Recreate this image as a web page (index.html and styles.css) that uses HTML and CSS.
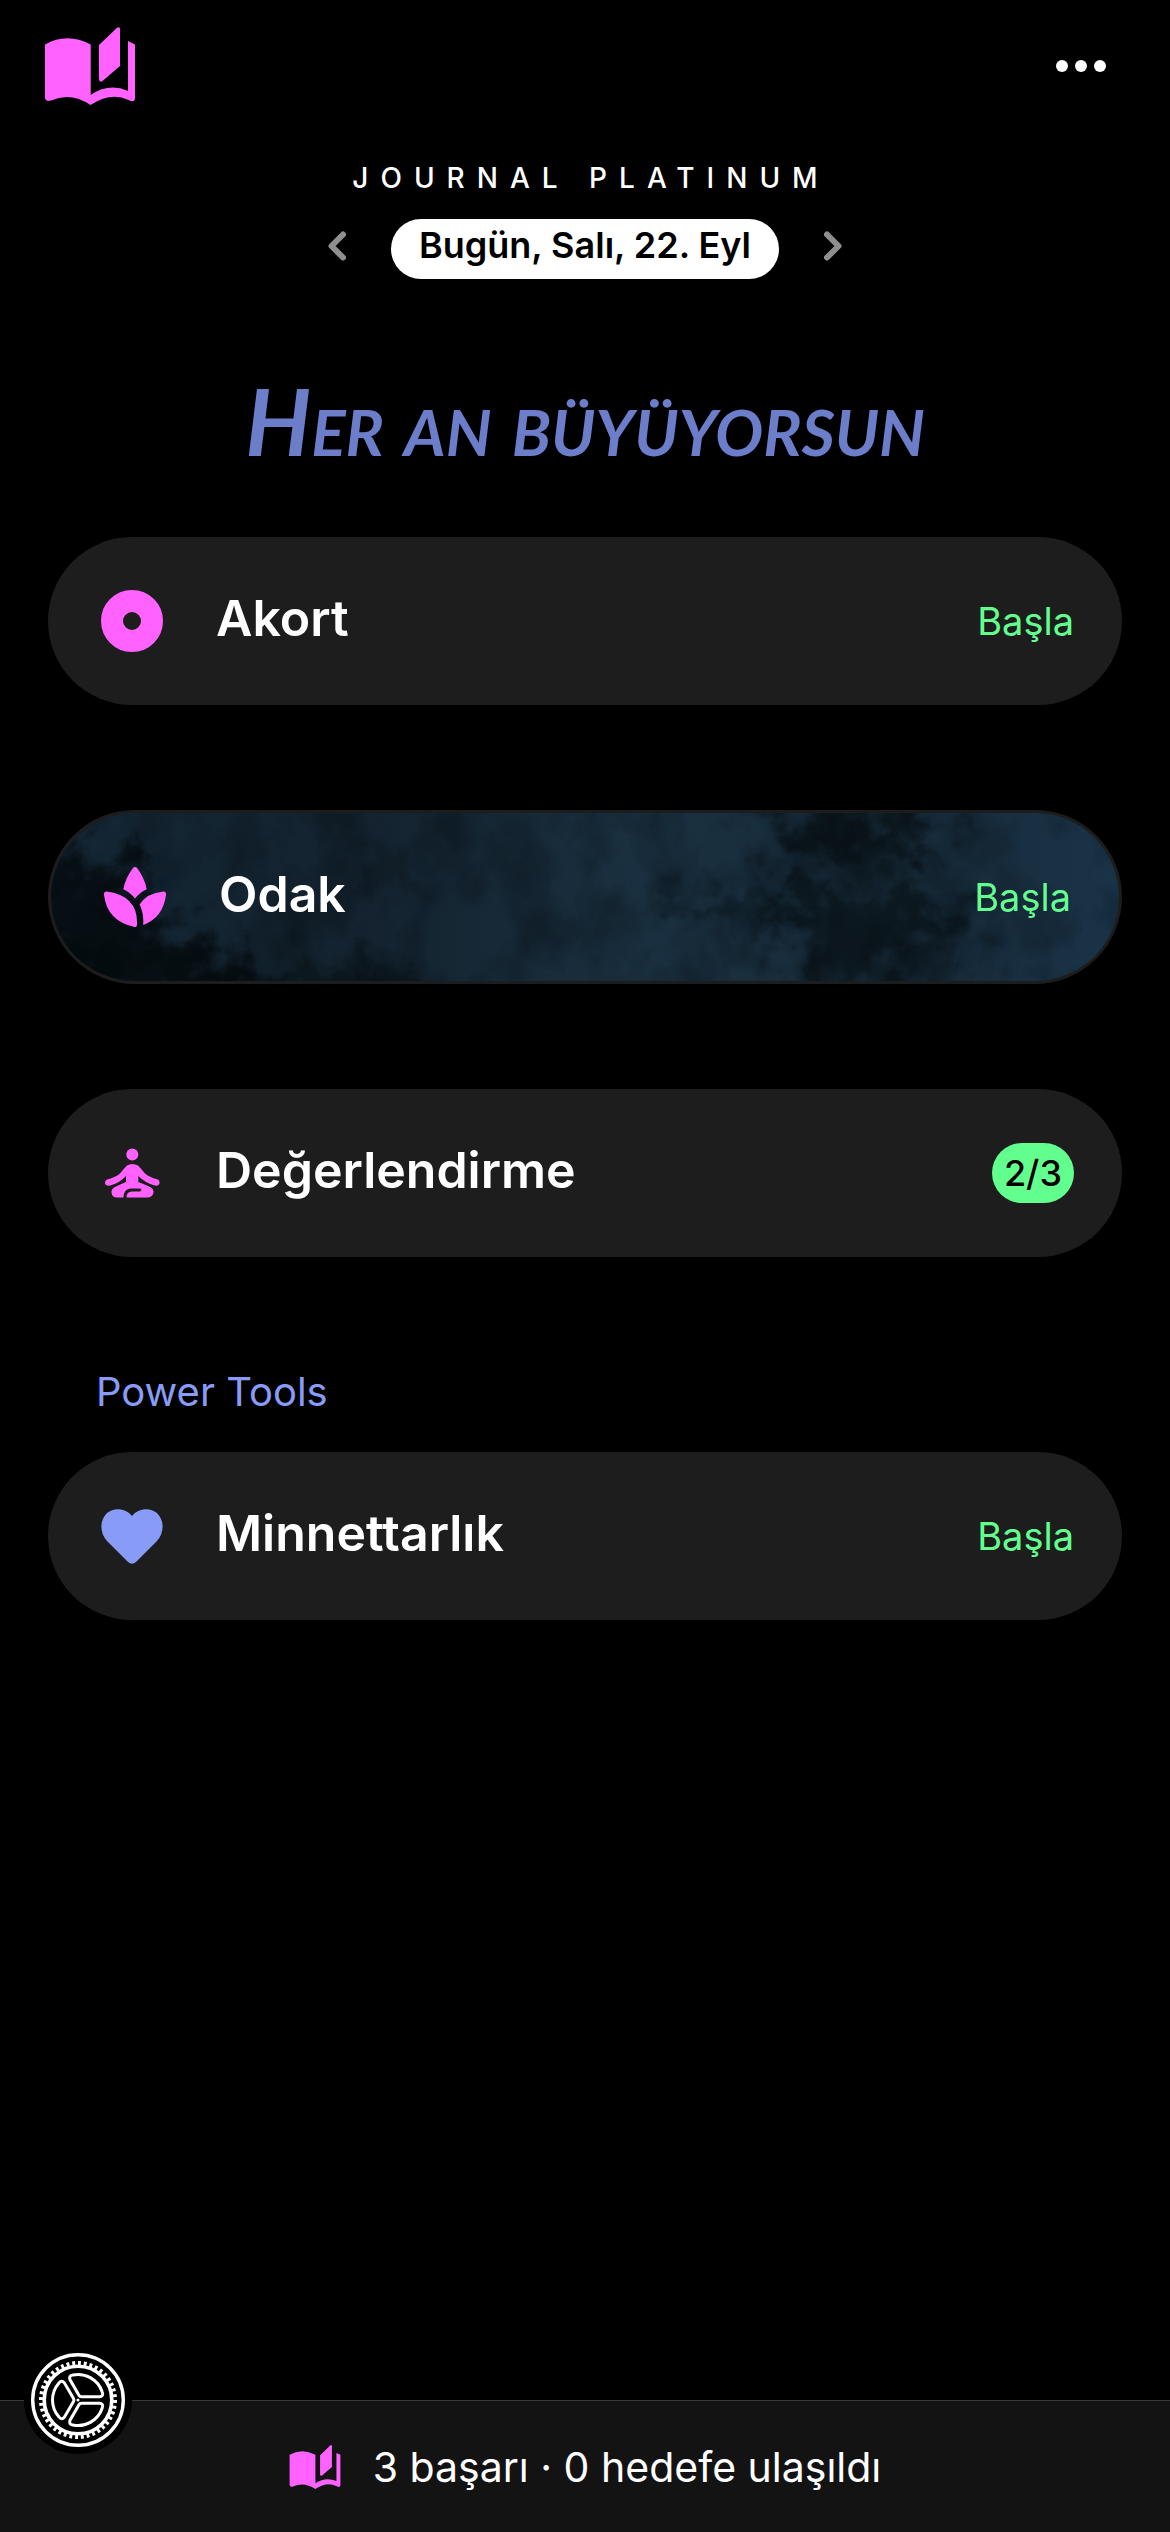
FILE: index.html
```html
<!DOCTYPE html>
<html lang="tr">
<head>
    <meta charset="UTF-8">
    <meta name="viewport" content="width=device-width, initial-scale=1.0">
    <title>Journal Platinum</title>
    <link rel="stylesheet" href="styles.css">
</head>
<body>
    <svg class="defs" width="0" height="0" aria-hidden="true">
        <symbol id="book" viewBox="0 0 90 78">
            <path d="M0 17.5Q22 5 45.7 17.5V68Q64 55.5 83 64V14L90 17.5V72Q89 76 83.5 73Q66 64.5 45.5 78Q26 64.5 6 73.5Q1 75 0 71Z"/>
            <path d="M54 18L72 .7Q75 -.8 75 2V39L57.5 54Q54.5 56 54 52Z"/>
        </symbol>
    </svg>

    <header class="topbar">
        <a class="logo" href="#home" aria-label="Journal"><svg width="90" height="78"><use href="#book"/></svg></a>
        <button class="more" aria-label="Menü">
            <svg width="50" height="12" viewBox="0 0 50 12"><circle cx="6" cy="6" r="6"/><circle cx="25" cy="6" r="6"/><circle cx="44" cy="6" r="6"/></svg>
        </button>
    </header>

    <main>
        <h1>JOURNAL PLATINUM</h1>
        <nav class="days">
            <button class="arrow" aria-label="Önceki gün">
                <svg width="18" height="30" viewBox="0 0 18 30"><path d="M15 3.5L3.5 15L15 26.5"/></svg>
            </button>
            <button class="today">Bugün, Salı, 22. Eyl</button>
            <button class="arrow" aria-label="Sonraki gün">
                <svg width="18" height="30" viewBox="0 0 18 30"><path d="M3 3.5L14.5 15L3 26.5"/></svg>
            </button>
        </nav>

        <p class="motto">Her an büyüyorsun</p>

        <div class="cards">
            <a class="card" href="#akort">
                <span class="icon"><svg width="62" height="62" viewBox="0 0 62 62"><circle class="ring" cx="31" cy="31" r="20"/></svg></span>
                <span class="name">Akort</span>
                <span class="start">Başla</span>
            </a>

            <a class="card card-photo" href="#odak">
                <svg class="texture" viewBox="0 0 1068 168" preserveAspectRatio="none" aria-hidden="true">
                    <defs>
                        <linearGradient id="wall">
                            <stop offset="0" stop-color="#142735"/>
                            <stop offset=".3" stop-color="#14232f"/>
                            <stop offset=".55" stop-color="#1a3040"/>
                            <stop offset=".8" stop-color="#182c3b"/>
                            <stop offset="1" stop-color="#1a3347"/>
                        </linearGradient>
                        <filter id="smudge" x="-30%" y="-30%" width="160%" height="160%" color-interpolation-filters="sRGB">
                            <feTurbulence type="fractalNoise" baseFrequency=".03 .03" numOctaves="6" seed="8" result="n"/>
                            <feGaussianBlur in="SourceGraphic" stdDeviation="13"/>
                            <feDisplacementMap in2="n" scale="110" xChannelSelector="R" yChannelSelector="G"/>
                        </filter>
                        <filter id="grain" x="0" y="0" width="100%" height="100%" color-interpolation-filters="sRGB">
                            <feTurbulence type="fractalNoise" baseFrequency=".016 .013" numOctaves="7" seed="21"/>
                            <feColorMatrix values="0 0 0 0 .02  0 0 0 0 .04  0 0 0 0 .05  2.5 1.5 0 0 -1.8"/>
                        </filter>
                    </defs>
                    <rect width="1068" height="168" fill="url(#wall)"/>
                    <g filter="url(#smudge)" fill="#050b0e">
                        <ellipse cx="40" cy="105" rx="75" ry="60" opacity=".85"/>
                        <ellipse cx="110" cy="165" rx="120" ry="34" opacity=".85"/>
                        <ellipse cx="270" cy="172" rx="120" ry="18" opacity=".6"/>
                        <ellipse cx="340" cy="55" rx="22" ry="34" opacity=".3"/>
                        <ellipse cx="800" cy="20" rx="90" ry="30" opacity=".7"/>
                        <ellipse cx="810" cy="100" rx="80" ry="36" opacity=".6"/>
                        <ellipse cx="680" cy="92" rx="90" ry="14" opacity=".45"/>
                        <ellipse cx="790" cy="155" rx="50" ry="30" opacity=".6"/>
                        <ellipse cx="890" cy="130" rx="30" ry="40" opacity=".45"/>
                    </g>
                    <rect width="1068" height="168" filter="url(#grain)" opacity=".35"/>
                </svg>
                <span class="icon">
                    <svg width="62" height="60" viewBox="0 0 61 59">
                        <path d="M30.5 31Q26 25 19 21.8Q21 11 28.5 1Q30.5 -1 32.5 1Q40 11 42 21.8Q35 25 30.5 31Z"/>
                        <path d="M2.5 24Q-.5 24 0 27.5Q3 53 30 59Q32.5 59 32.5 56.5Q33.5 28 2.5 24Z"/>
                        <path d="M58.5 24Q61.5 24 61 27.5Q58 50 38.5 57Q39.5 46 35 37Q42 25.5 58.5 24Z"/>
                    </svg>
                </span>
                <span class="name">Odak</span>
                <span class="start">Başla</span>
            </a>

            <a class="card" href="#degerlendirme">
                <span class="icon">
                    <svg width="55" height="50" viewBox="0 0 55 49">
                        <circle cx="27.3" cy="6" r="6"/>
                        <path d="M22 17Q27 14 33 17Q36 20 40 25Q45 29 53 31Q55.5 33 54 36Q53 37.5 50 37Q41 35 33.3 27.5V33.5Q40 36 46 39Q49 41 48.5 44Q47.5 49 42 49H21.5Q21.5 43 27 43H35Q37 42 36 40.2Q35.5 40 34 40H25Q18.5 41 18.5 49H12Q7 49 6.5 44Q6 41 9 39Q15 36 21 33.5V27.5Q14 35 5 37Q1.5 37.5 .5 36Q-1 33 2 31Q10 29 15 25Q19 20 22 17Z"/>
                    </svg>
                </span>
                <span class="name">Değerlendirme</span>
                <span class="badge">2/3</span>
            </a>
        </div>

        <h2>Power Tools</h2>
        <a class="card" href="#minnettarlik">
            <span class="icon icon-blue">
                <svg width="62" height="55" viewBox="0 0 62 55"><path d="M31 7C25 -1 13 -2 6 4C-2 12 -1 24 6 32L27 53Q31 56.5 35 53L56 32C63 24 64 12 56 4C49 -2 37 -1 31 7Z"/></svg>
            </span>
            <span class="name">Minnettarlık</span>
            <span class="start">Başla</span>
        </a>
    </main>

    <footer>
        <button class="settings" aria-label="Ayarlar">
            <svg width="94" height="94" viewBox="-47 -47 94 94">
                <circle r="45.3" stroke-width="3.4"/>
                <circle r="33.8" stroke-width="3.6"/>
                <circle r="37" stroke-width="4" pathLength="80" stroke-dasharray="1 1"/>
                <g stroke-width="3">
                    <path id="wedge" d="M-4.5 -1.5L-13.5 -17Q-16.5 -20.5 -19 -17A25.5 25.5 0 0 0 -19 17Q-16.5 20.5 -13.5 17L-4.5 1.5Q-3.7 0 -4.5 -1.5Z"/>
                    <use href="#wedge" transform="rotate(120)"/>
                    <use href="#wedge" transform="rotate(240)"/>
                </g>
                <circle r=".8" stroke-width="1.5"/>
            </svg>
        </button>
        <svg class="book" width="52" height="44"><use href="#book"/></svg>
        <span>3 başarı · 0 hedefe ulaşıldı</span>
    </footer>
</body>
</html>
```

FILE: styles.css
```css
* {
    box-sizing: border-box;
}
body {
    display: flex;
    flex-direction: column;
    min-height: 100vh;
    margin: 0;
    background-color: #000;
    color: #fff;
    font-family: Inter, "Liberation Sans", sans-serif;
}
button {
    border: 0;
    padding: 0;
    background: none;
    color: inherit;
    font: inherit;
    cursor: pointer;
}
a {
    color: inherit;
    text-decoration: none;
}
svg {
    display: block;
    fill: currentColor;
}
.defs {
    position: absolute;
}
.topbar {
    display: flex;
    justify-content: space-between;
    align-items: center;
    padding: 27px 64px 0 45px;
}
.logo, .book {
    color: #ff62ff;
}
main {
    padding: 0 48px;
}
h1 {
    margin: 56px 0 24px;
    padding-left: 12px;
    font-size: 28px;
    line-height: 34px;
    font-weight: 500;
    letter-spacing: 12px;
    text-align: center;
}
.days {
    display: flex;
    justify-content: center;
    align-items: center;
    gap: 45px;
}
.arrow {
    padding-bottom: 6px;
}
.arrow path {
    fill: none;
    stroke: #8e8e8e;
    stroke-width: 6;
    stroke-linecap: round;
    stroke-linejoin: round;
}
.today {
    height: 60px;
    padding: 0 28px 8px;
    border-radius: 30px;
    background-color: #fff;
    color: #000;
    font-size: 36px;
    font-weight: 600;
}
.motto {
    margin: 96px 0 70px;
    color: #6c7dc9;
    font-family: Lato, sans-serif;
    font-size: 92px;
    font-style: italic;
    font-weight: 700;
    font-variant: small-caps;
    line-height: 92px;
    text-align: center;
}
.cards {
    display: flex;
    flex-direction: column;
    gap: 105px;
}
.card {
    display: flex;
    align-items: center;
    gap: 48px;
    min-height: 168px;
    padding: 0 48px;
    border-radius: 87px;
    background-color: #1d1d1d;
}
.card-photo {
    position: relative;
    min-height: 174px;
    border: 3px solid #1d1d1d;
    overflow: hidden;
}
.texture {
    position: absolute;
    inset: 0;
    width: 100%;
    height: 100%;
}
.card-photo span {
    position: relative;
}
.icon {
    display: flex;
    justify-content: center;
    width: 72px;
    color: #ff62ff;
}
.icon-blue {
    color: #889bf6;
}
.ring {
    fill: none;
    stroke: currentColor;
    stroke-width: 22;
}
.name {
    flex: 1;
    padding-bottom: 6px;
    font-size: 50px;
    font-weight: 600;
}
.start {
    color: #62ff8f;
    font-size: 38px;
}
.badge {
    padding: 0 12px;
    border-radius: 30px;
    background-color: #62ff8f;
    color: #000;
    font-size: 36px;
    font-weight: 500;
    line-height: 60px;
}
h2 {
    margin: 110px 48px 35px;
    color: #889bf6;
    font-size: 40px;
    font-weight: 400;
    line-height: 50px;
}
footer {
    position: relative;
    display: flex;
    justify-content: center;
    align-items: center;
    gap: 32px;
    height: 132px;
    margin-top: auto;
    border-top: 1px solid #3a3a3a;
    background-color: #131313;
    font-size: 41px;
}
.settings {
    position: absolute;
    left: 24px;
    top: -55px;
    padding: 7px;
    border-radius: 50%;
    background-color: #000;
}
.settings svg {
    fill: none;
    stroke: #fff;
}
```
